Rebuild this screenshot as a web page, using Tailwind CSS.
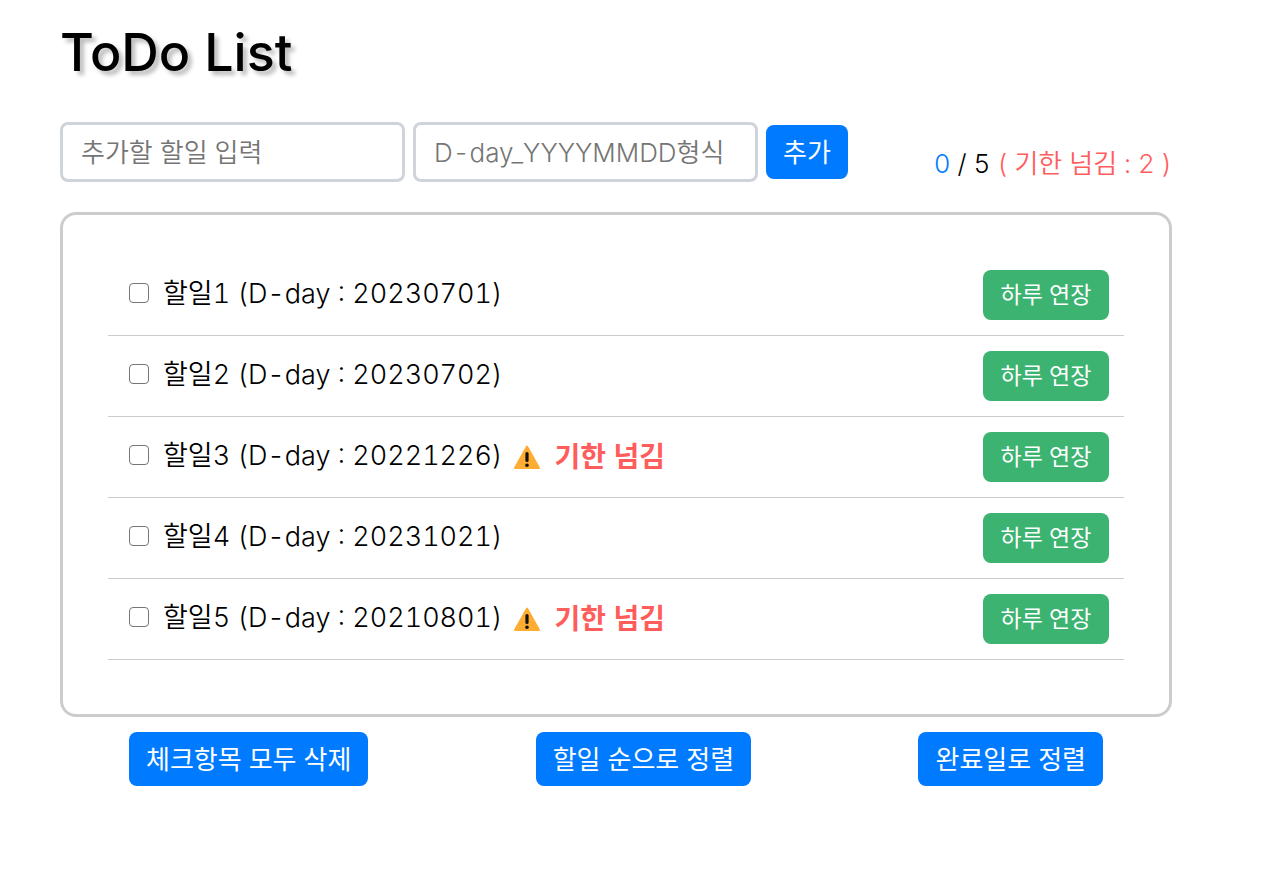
<!DOCTYPE html>
<html lang="ko">
<head>
  <meta charset="UTF-8">
  <meta name="viewport" content="width=device-width, initial-scale=1.0">
  <title>ToDo List</title>
  <script src="https://cdn.jsdelivr.net/npm/@tailwindcss/browser@4"></script>
</head>
<body class="bg-white text-black tabular-nums font-['Inter','Noto_Sans_CJK_KR',sans-serif]">
  <div class="pl-[60px] pr-[101px] pt-5">
    <h1 class="text-[52px] leading-[66px] font-medium [text-shadow:4px_4px_4px_#bbb]">ToDo List</h1>

    <form id="todo-form" class="mt-9 flex items-center gap-2">
      <input id="todo-name" type="text" aria-label="할일" placeholder="추가할 할일 입력" class="w-[345px] h-[60px] px-[18px] border-3 border-[#ced4da] rounded-lg text-[26px] font-[350] placeholder:text-[#757575]">
      <input id="todo-day" type="text" aria-label="D-day" placeholder="D-day_YYYYMMDD형식" class="w-[345px] h-[60px] px-[18px] border-3 border-[#ced4da] rounded-lg text-[26px] font-[350] placeholder:text-[#757575]">
      <button type="submit" class="h-[54px] px-[17px] bg-[#007bff] text-white text-[26px] rounded-lg whitespace-nowrap">추가</button>
      <p class="ml-auto pt-6 text-[26px] leading-9 font-[350] whitespace-nowrap"><span class="text-[#007bff]">0</span> / 5 <span class="text-[#ff5c5c]">( 기한 넘김 : 2 )</span></p>
    </form>

    <ul id="todo-list" class="mt-[30px] px-[45px] pt-10 pb-[54px] border-3 border-[#ccc] rounded-2xl">
      <!-- Rows added via JS -->
    </ul>

    <div class="mt-[15px] px-[69px] flex justify-between">
      <button type="button" class="h-[54px] px-[17px] bg-[#007bff] text-white text-[26px] rounded-lg">체크항목 모두 삭제</button>
      <button type="button" class="h-[54px] px-[17px] bg-[#007bff] text-white text-[26px] rounded-lg">할일 순으로 정렬</button>
      <button type="button" class="h-[54px] px-[17px] bg-[#007bff] text-white text-[26px] rounded-lg">완료일로 정렬</button>
    </div>
  </div>

  <script>
    const todoList = document.getElementById('todo-list');

    const TODOS = [
      { name: '할일1', day: '20230701', late: false },
      { name: '할일2', day: '20230702', late: false },
      { name: '할일3', day: '20221226', late: true },
      { name: '할일4', day: '20231021', late: false },
      { name: '할일5', day: '20210801', late: true }
    ];

    const WARNING = `
      <span class="ml-2.5 flex items-center gap-3.5 text-[28px] font-bold text-[#ff5c5c]">
        <svg class="w-7 h-7" viewBox="0 0 28 28" aria-hidden="true">
          <path d="M14 3.5 26 25H2z" fill="#ffac33" stroke="#ffac33" stroke-width="2" stroke-linejoin="round"/>
          <path d="M14 10.5v7" stroke="#111" stroke-width="3.2" stroke-linecap="round"/>
          <circle cx="14" cy="22.2" r="1.8" fill="#111"/>
        </svg>
        기한 넘김
      </span>`;

    function loadTodos() {
      todoList.innerHTML = '';
      TODOS.forEach((t, i) => {
        const row = document.createElement('li');
        row.className = 'flex items-center pl-[21px] pr-[15px] py-[15px] border-b border-[#ccc]';
        row.innerHTML = `
          <input id="todo-${i}" type="checkbox" class="appearance-none w-5 h-5 mb-1 bg-white border border-[#767676] checked:bg-[#007bff] rounded-[4px]">
          <label for="todo-${i}" class="ml-3.5 pb-0.5 text-[27px] leading-[48px] font-[350]">${t.name} (D-day : ${t.day})</label>
          ${t.late ? WARNING : ''}
          <button type="button" class="ml-auto w-[126px] h-[50px] bg-[#3cb371] text-white text-[23px] rounded-lg">하루 연장</button>
        `;
        todoList.appendChild(row);
      });
    }

    document.getElementById('todo-form').addEventListener('submit', (e) => {
      e.preventDefault();
      const name = document.getElementById('todo-name').value;
      const day = document.getElementById('todo-day').value;
      if (!name || !day) return;
      TODOS.push({ name, day, late: false });
      loadTodos();
      e.target.reset();
    });

    loadTodos();
  </script>
</body>
</html>
